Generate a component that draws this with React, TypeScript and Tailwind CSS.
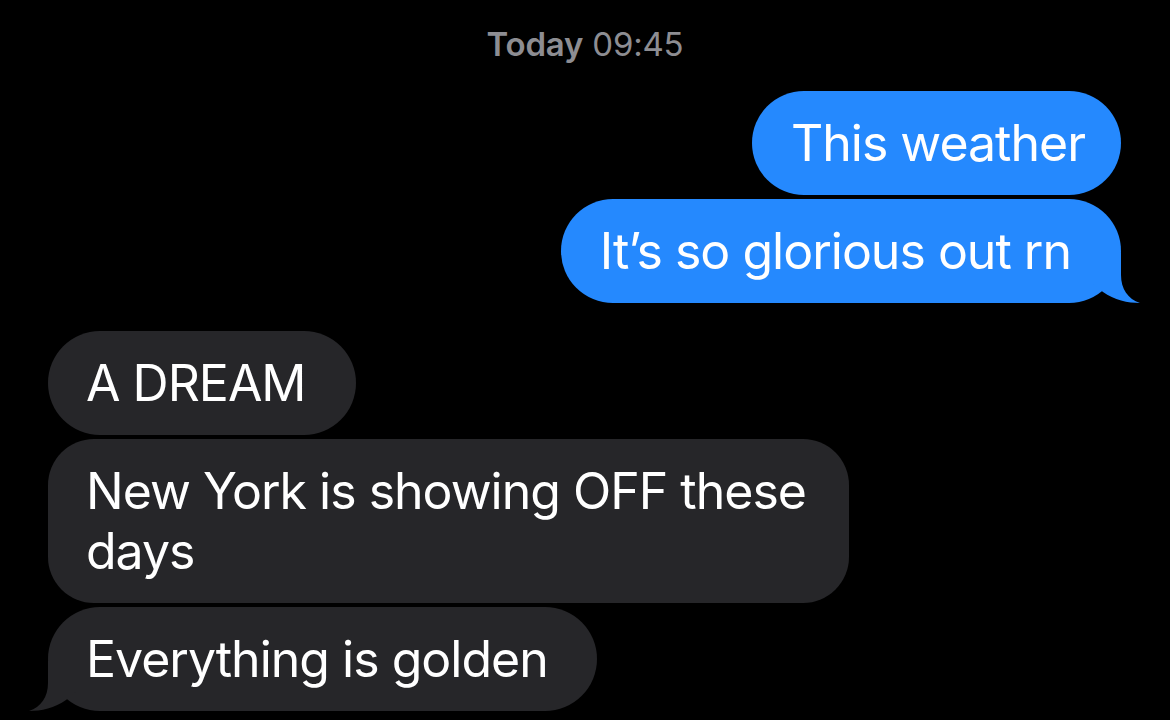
import React from "react";

function Tail({ color, side }: { color: string; side: "left" | "right" }) {
  return (
    <svg
      width="50"
      height="50"
      viewBox="0 0 50 50"
      className={
        side === "right"
          ? "absolute right-[-19px] bottom-0"
          : "absolute left-[-19px] bottom-0 -scale-x-100"
      }
    >
      <path
        d="M 0 0 L 31 0 L 31 22 C 31 36 38 46 50 50 C 38 50 24 47 13 39 L 0 28 Z"
        fill={color}
      />
    </svg>
  );
}

const font = { fontFamily: "Inter, 'Noto Sans', sans-serif" };

export default function App() {
  return (
    <div
      className="w-full h-[720px] bg-black overflow-hidden flex flex-col"
      style={font}
    >
      <div className="pt-[24px] h-[64px] flex justify-center text-[33px] leading-[40px] text-[#8d8d92] tracking-[-0.2px]">
        <span className="font-semibold">Today</span>
        <span className="ml-[9px]">09:45</span>
      </div>

      <div className="mt-[27px] flex flex-col items-end gap-[4px] pr-[49px]">
        <div className="whitespace-nowrap rounded-[52px] bg-[#2589fe] text-white text-[50px] leading-[60px] pl-[39px] pr-[36px] py-[22px] tracking-[-1px]">
          This weather
        </div>
        <div className="relative whitespace-nowrap rounded-[52px] bg-[#2589fe] text-white text-[50px] leading-[60px] pl-[39px] pr-[50px] py-[22px] tracking-[-1px]">
          It’s so glorious out rn
          <Tail color="#2589fe" side="right" />
        </div>
      </div>

      <div className="mt-[28px] flex flex-col items-start gap-[4px] pl-[48px]">
        <div className="whitespace-nowrap rounded-[52px] bg-[#262629] text-white text-[50px] leading-[60px] pl-[38px] pr-[50px] py-[22px] tracking-[-1px]">
          A DREAM
        </div>
        <div className="whitespace-nowrap rounded-[46px] bg-[#262629] text-white text-[50px] leading-[60px] pl-[38px] pr-[20px] py-[22px] tracking-[-1px] w-[801px]">
          New York is showing OFF these
          <br />
          days
        </div>
        <div className="relative whitespace-nowrap rounded-[52px] bg-[#262629] text-white text-[50px] leading-[60px] pl-[38px] pr-[49px] py-[22px] tracking-[-1px]">
          Everything is golden
          <Tail color="#262629" side="left" />
        </div>
      </div>
    </div>
  );
}
